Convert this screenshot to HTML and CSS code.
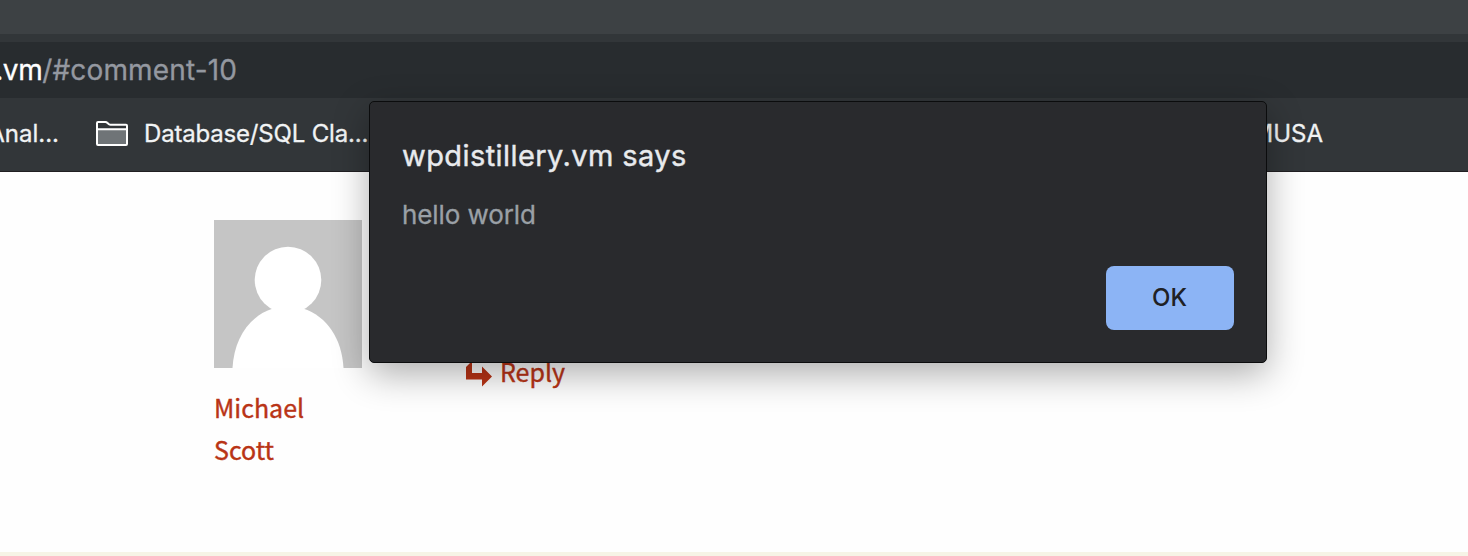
FILE: index.html
```html
<!DOCTYPE html>
<html lang="en">
<head>
<meta charset="utf-8">
<title>wpdistillery.vm</title>
<link rel="stylesheet" href="styles.css">
</head>
<body>
<div class="tabstrip"></div>
<div class="toolbar">
  <div class="address"><span class="url"><span class="host">.vm</span>/#comment-10</span></div>
</div>
<nav class="bookmarks">
  <div class="bookmark bookmark-first"><span>Anal...</span></div>
  <div class="bookmark bookmark-folder">
    <svg class="folder" width="34" height="28" viewBox="0 0 34 28">
      <path d="M2 11H32V25H2Z" fill="#6f7477"/>
      <path d="M2 25V4Q2 3 3 3H10.500Q11.500 3 12.200 3.700L14 5.300Q14.600 5.800 15.500 5.800H31Q32 5.800 32 6.800V25Q32 26 31 26H3Q2 26 2 25ZM2 10.200H32" fill="none" stroke="#fff" stroke-width="2"/>
    </svg>
    <span class="folder-name">Database/SQL Cla...</span>
  </div>
  <div class="bookmark bookmark-last"><span>MUSA</span></div>
</nav>
<main class="page">
  <div class="author">
    <svg class="avatar" width="148" height="148" viewBox="0 0 148 148">
      <rect width="148" height="148" fill="#c5c5c5"/>
      <circle cx="74" cy="60" r="33.300" fill="#fff"/>
      <path d="M18.500 148C20 119 35 96 59 88.500H89C113 96 128 119 129.500 148Z" fill="#fff"/>
    </svg>
    <a class="name">Michael<br>Scott</a>
  </div>
  <a class="reply">
    <svg class="arrow" width="28" height="30" viewBox="0 0 28 30">
      <path d="M1 7L7 1V13H17V6.500L27 16.500L17 26.500V19.500H1Z" fill="#b93416"/>
    </svg>
    <span>Reply</span>
  </a>
</main>
<div class="dialog">
  <h1 class="title">wpdistillery.vm says</h1>
  <p class="message">hello world</p>
  <button class="ok">OK</button>
</div>
</body>
</html>
```
FILE: styles.css
```css
* { box-sizing: border-box; }
body {
  margin: 0;
  height: 556px;
  overflow: hidden;
  display: flex;
  flex-direction: column;
  background: #fefefe;
  font-family: Inter, "Liberation Sans", sans-serif;
}
.tabstrip { height: 34px; background: #3d4144; flex: none; }
.toolbar { height: 64px; padding-top: 8px; background: #323639; flex: none; }
.address {
  height: 56px;
  width: 100%;
  background: #282c2f;
  color: #9498a0;
  font-size: 28px;
  line-height: 57px;
  letter-spacing: .14px;
  -webkit-text-stroke: .3px;
}
.url {
  display: flex;
  justify-content: flex-end;
  width: 237px;
  overflow: hidden;
  white-space: nowrap;
}
.host { color: #fff; letter-spacing: -.45px; }
.bookmarks {
  height: 74px;
  flex: none;
  display: flex;
  background: #323639;
  border-bottom: 1px solid #211f22;
  color: #f1f3f4;
  font-size: 24px;
  line-height: 71px;
  -webkit-text-stroke: .3px;
}
.bookmark { display: flex; white-space: nowrap; }
.bookmark-first { width: 59px; justify-content: flex-end; overflow: hidden; }
.bookmark-folder { margin-left: 36px; width: 280px; }
.bookmark-last { width: 948px; justify-content: flex-end; }
.folder { margin: 21px 15px 0 0; flex: none; }
.folder-name { letter-spacing: -.18px; }
.page {
  flex: 1;
  display: flex;
  align-items: flex-start;
  padding: 48px 0 0 214px;
  border-bottom: 4px solid #f6f4e6;
  color: #b93416;
  font-family: "Noto Sans CJK SC", "Open Sans", sans-serif;
  font-size: 25px;
  line-height: 42px;
  -webkit-text-stroke: .4px;
}
.author { width: 148px; }
.avatar { display: block; margin-bottom: 18px; }
.reply { display: flex; margin: 130px 0 0 103px; }
.arrow { margin: 10px 7px 0 0; }
.dialog {
  position: absolute;
  left: 369px;
  top: 101px;
  width: 898px;
  height: 262px;
  padding: 34px 32px 32px;
  display: flex;
  flex-direction: column;
  background: #292a2d;
  border: 1px solid #0b0c0d;
  border-radius: 5px;
  box-shadow: 0 11px 36px rgba(0, 0, 0, .32);
}
.title {
  margin: 0;
  font-size: 29px;
  font-weight: 400;
  line-height: 40px;
  letter-spacing: .42px;
  color: #e8eaed;
  -webkit-text-stroke: .4px;
}
.message {
  margin: 20px 0 0;
  font-size: 26px;
  line-height: 38px;
  letter-spacing: -.1px;
  color: #9aa0a6;
  -webkit-text-stroke: .3px;
}
.ok {
  margin-top: auto;
  align-self: flex-end;
  width: 128px;
  height: 64px;
  padding: 0 1px 1px 0;
  border: 0;
  border-radius: 8px;
  background: #8cb4f5;
  color: #202124;
  font: 500 24px Inter, "Liberation Sans", sans-serif;
}
```
